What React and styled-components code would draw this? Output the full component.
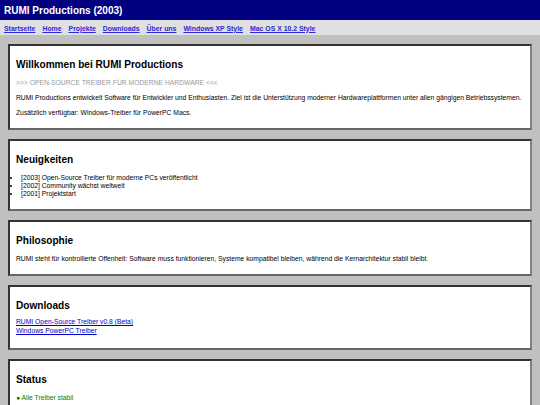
import React from 'react'
import styled, { createGlobalStyle } from 'styled-components';

const GlobalStyle = createGlobalStyle`
  html, body {
    margin: 0;
    padding: 0;
    background-color: #c0c0c0;
    font-family: "Liberation Sans", Arial, sans-serif;
    color: #000;
  }
`;

const Header = styled.header`
  height: 20px;
  background-color: #000080;
  color: #fff;
  display: flex;
  align-items: center;
  padding: 1px 4px 0 4px;
  box-sizing: border-box;
`;

const SiteTitle = styled.h1`
  margin: 0;
  font-size: 10px;
  font-weight: bold;
`;

const Nav = styled.nav`
  height: 15px;
  background-color: #e0e0e0;
  display: flex;
  align-items: center;
  gap: 7px;
  padding: 1px 4px 0 4px;
  box-sizing: border-box;
`;

const NavLink = styled.a`
  font-size: 6.9px;
  font-weight: bold;
  color: #2a2ad8;
  text-decoration: underline;
`;

const Main = styled.main`
  display: flex;
  flex-direction: column;
  gap: 9.4px;
  padding: 9px 8px 0 8px;
`;

const Section = styled.section`
  background-color: #fff;
  border: 2px solid;
  border-color: #333 #808080 #666 #333;
  padding: 13px 6px 4px 6px;
`;

const Heading = styled.h2`
  margin: 0 0 8px 0;
  font-size: 10.1px;
  line-height: 12px;
  font-weight: bold;
`;

const Text = styled.p`
  margin: 0 0 7px 0;
  font-size: 6.75px;
  line-height: 8px;
  color: ${({ $color }) => $color || '#000'};
  text-transform: ${({ $upper }) => ($upper ? 'uppercase' : 'none')};
`;

const NewsList = styled.ul`
  margin: 0 0 7px 0;
  padding-left: 5px;
  font-size: 6.75px;
  line-height: 7.7px;
`;

const LinkList = styled.div`
  display: flex;
  flex-direction: column;
  margin: -2px 0 9px 0;
  font-size: 6.75px;
  line-height: 8.4px;
`;

const DownloadLink = styled.a`
  color: #0000cc;
  text-decoration: underline;
`;

const navItems = ['Startseite', 'Home', 'Projekte', 'Downloads', 'Über uns', 'Windows XP Style', 'Mac OS X 10.2 Style'];

const news = [
  '[2003] Open-Source Treiber für moderne PCs veröffentlicht',
  '[2002] Community wächst weltweit',
  '[2001] Projektstart',
];

export default function App() {
  return (
    <>
      <GlobalStyle />
      <Header>
        <SiteTitle>RUMI Productions (2003)</SiteTitle>
      </Header>
      <Nav>
        {navItems.map((item) => (
          <NavLink key={item} href="#">{item}</NavLink>
        ))}
      </Nav>
      <Main>
        <Section>
          <Heading>Willkommen bei RUMI Productions</Heading>
          <Text $color="#999" $upper>&gt;&gt;&gt; Open-Source Treiber für moderne Hardware &lt;&lt;&lt;</Text>
          <Text>RUMI Productions entwickelt Software für Entwickler und Enthusiasten. Ziel ist die Unterstützung moderner Hardwareplattformen unter allen gängigen Betriebssystemen.</Text>
          <Text>Zusätzlich verfügbar: Windows-Treiber für PowerPC Macs.</Text>
        </Section>
        <Section>
          <Heading>Neuigkeiten</Heading>
          <NewsList>
            {news.map((n) => <li key={n}>{n}</li>)}
          </NewsList>
        </Section>
        <Section>
          <Heading>Philosophie</Heading>
          <Text>RUMI steht für kontrollierte Offenheit: Software muss funktionieren, Systeme kompatibel bleiben, während die Kernarchitektur stabil bleibt.</Text>
        </Section>
        <Section>
          <Heading>Downloads</Heading>
          <LinkList>
            <DownloadLink href="#">RUMI Open-Source Treiber v0.8 (Beta)</DownloadLink>
            <DownloadLink href="#">Windows PowerPC Treiber</DownloadLink>
          </LinkList>
        </Section>
        <Section>
          <Heading>Status</Heading>
          <Text $color="#008000">● Alle Treiber stabil</Text>
        </Section>
      </Main>
    </>
  )
}
